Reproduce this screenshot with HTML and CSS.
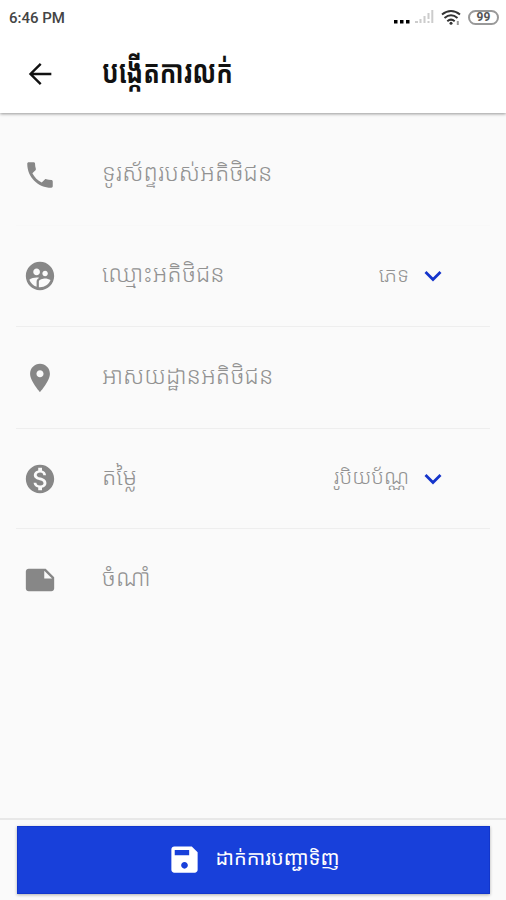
FILE: index.html
```html
<!DOCTYPE html>
<html lang="km">
<head>
    <meta charset="UTF-8">
    <meta name="viewport" content="width=device-width, initial-scale=1.0">
    <title>បង្កើតការលក់</title>
    <link rel="stylesheet" href="styles.css">
</head>
<body>

    <!-- Header -->
    <header class="header">
        <div class="status-bar">
            <span class="time">6:46 PM</span>
            <div class="status-icons">
                <svg class="dots" width="18" height="20" viewBox="0 0 18 20">
                    <path d="M2 12h3.500v3.500H2zM8 12h3.500v3.500H8zM14 12h3.500v3.500H14z"/>
                </svg>
                <svg class="signal" width="19" height="20" viewBox="0 0 19 20">
                    <path d="M0 13h3v2H0zM4.500 11h2v4h-2zM8.500 8h2v7h-2zM12.500 5h2v6h-2zM16.300 2h2v13h-2zM12.500 13h2v2h-2z"/>
                </svg>
                <svg class="wifi" width="20" height="20" viewBox="0 0 20 20">
                    <path d="M1 6.500Q10 -0.500 19 6.500M3.500 10Q10 4.500 16.500 10M6.300 13.200Q10 10 13.700 13.200"/>
                    <circle cx="10" cy="15.200" r="1.500"/>
                    <path class="wifi-mark" d="M16.800 17v-4"/>
                </svg>
                <span class="battery">99</span>
            </div>
        </div>
        <div class="title-bar">
            <svg class="back" width="34" height="34" viewBox="0 0 24 24">
                <path d="M20 12H5.500M12.500 4.800L5.300 12l7.200 7.200"/>
            </svg>
            <h1>បង្កើតការលក់</h1>
        </div>
    </header>

    <!-- Form -->
    <main class="form">
        <div class="row row-light">
            <svg class="icon" viewBox="0 0 24 24">
                <path d="M6.620 10.790c1.440 2.830 3.760 5.140 6.590 6.590l2.200-2.200c.27-.27.67-.36 1.020-.24 1.120.37 2.330.57 3.570.57.55 0 1 .45 1 1V20c0 .55-.45 1-1 1-9.390 0-17-7.610-17-17 0-.55.45-1 1-1h3.500c.55 0 1 .45 1 1 0 1.250.2 2.450.57 3.570.11.35.03.74-.25 1.020l-2.200 2.200z"/>
            </svg>
            <span class="label">ទូរស័ព្ទរបស់អតិថិជន</span>
        </div>
        <div class="row">
            <svg class="icon" viewBox="0 0 24 24">
                <path d="M11.990 2c-5.520 0-10 4.480-10 10s4.480 10 10 10 10-4.480 10-10-4.480-10-10-10zm3.610 6.340c1.070 0 1.930.86 1.930 1.930 0 1.070-.86 1.930-1.930 1.930-1.070 0-1.930-.86-1.930-1.930-.01-1.070.86-1.930 1.930-1.930zm-6-1.580c1.300 0 2.360 1.060 2.360 2.360 0 1.300-1.060 2.360-2.360 2.360s-2.360-1.060-2.360-2.360c0-1.310 1.050-2.360 2.360-2.360zm0 9.130v3.750c-2.400-.75-4.300-2.600-5.140-4.960 1.050-1.120 3.670-1.690 5.140-1.690.53 0 1.200.08 1.900.22-1.640.87-1.900 2.020-1.900 2.680zM11.990 20c-.27 0-.53-.01-.79-.04v-4.070c0-1.420 2.940-2.130 4.400-2.130 1.070 0 2.920.39 3.840 1.150-1.170 2.970-4.060 5.090-7.450 5.090z"/>
            </svg>
            <span class="label">ឈ្មោះអតិថិជន</span>
            <span class="select">ភេទ</span>
            <svg class="chevron" viewBox="0 0 18 12"><path d="M1.500 2l7.500 7.500L16.500 2"/></svg>
        </div>
        <div class="row row-tall">
            <svg class="icon" viewBox="0 0 24 24">
                <path d="M12 2C8.130 2 5 5.130 5 9c0 5.250 7 13 7 13s7-7.750 7-13c0-3.870-3.130-7-7-7zm0 9.500c-1.380 0-2.500-1.120-2.500-2.500s1.120-2.500 2.500-2.500 2.500 1.120 2.500 2.500-1.120 2.500-2.500 2.500z"/>
            </svg>
            <span class="label">អាសយដ្ឋានអតិថិជន</span>
        </div>
        <div class="row row-short">
            <svg class="icon" viewBox="0 0 24 24">
                <path d="M12 2C6.480 2 2 6.480 2 12s4.480 10 10 10 10-4.480 10-10S17.520 2 12 2zm1.410 16.090V20h-2.670v-1.930c-1.710-.36-3.160-1.460-3.270-3.400h1.960c.1 1.050.82 1.870 2.650 1.870 1.960 0 2.400-.98 2.400-1.590 0-.83-.44-1.610-2.670-2.140-2.480-.6-4.180-1.620-4.180-3.670 0-1.720 1.390-2.840 3.110-3.210V4h2.670v1.950c1.860.45 2.790 1.860 2.850 3.390H14.300c-.05-1.110-.64-1.870-2.220-1.870-1.500 0-2.400.68-2.400 1.640 0 .84.65 1.390 2.670 1.910s4.180 1.390 4.180 3.910c-.01 1.830-1.380 2.830-3.120 3.160z"/>
            </svg>
            <span class="label">តម្លៃ</span>
            <span class="select">រូបិយប័ណ្ណ</span>
            <svg class="chevron" viewBox="0 0 18 12"><path d="M1.500 2l7.500 7.500L16.500 2"/></svg>
        </div>
        <div class="row row-last">
            <svg class="icon" viewBox="0 0 24 24">
                <path d="M22 10l-6-6H4c-1.100 0-2 .9-2 2v12.010c0 1.100.9 1.990 2 1.990l16-.01c1.100 0 2-.89 2-1.990v-8zm-7-4.500l5.500 5.500H15V5.500z"/>
            </svg>
            <span class="label">ចំណាំ</span>
        </div>
    </main>

    <!-- Save button -->
    <footer class="footer">
        <button type="button" class="btn">
            <svg width="35" height="35" viewBox="0 0 24 24">
                <path d="M17 3H5c-1.110 0-2 .9-2 2v14c0 1.100.89 2 2 2h14c1.100 0 2-.9 2-2V7l-4-4zm-5 15.300c-1.270 0-2.300-1.030-2.300-2.300s1.030-2.300 2.300-2.300 2.300 1.030 2.300 2.300-1.030 2.300-2.300 2.300zm3.200-9.300H5.300V5.400h9.900V9z"/>
            </svg>
            <span>ដាក់ការបញ្ជាទិញ</span>
        </button>
    </footer>

</body>
</html>
```
FILE: styles.css
```css
* {
    box-sizing: border-box;
}

body {
    margin: 0;
    height: 900px;
    display: flex;
    flex-direction: column;
    background-color: #fafafa;
    font-family: Roboto, "Noto Sans Khmer", "Khmer OS", "DejaVu Sans", sans-serif;
    overflow: hidden;
}

/* Header */
.header {
    height: 113px;
    background-color: #fff;
    box-shadow: 0 1px 3px rgba(0, 0, 0, 0.4);
}

.status-bar {
    display: flex;
    justify-content: space-between;
    height: 36px;
    padding: 8px 7px 0 9px;
}

.time {
    font-size: 15px;
    line-height: 20px;
    font-weight: 500;
    color: #444;
}

.status-icons {
    display: flex;
    align-items: flex-start;
}

.dots {
    margin-right: 5px;
}

.signal {
    margin-right: 7px;
    fill: #ccc;
}

.wifi {
    margin-right: 7px;
    fill: #333;
}

.wifi path {
    fill: none;
    stroke: #333;
    stroke-width: 2;
}

.wifi .wifi-mark {
    stroke: #999;
}

.battery {
    width: 31px;
    height: 15px;
    margin-top: 2px;
    border: 2px solid #999;
    border-radius: 8px;
    font-size: 12px;
    font-weight: 700;
    line-height: 11px;
    text-align: center;
    color: #555;
}

.title-bar {
    display: flex;
    align-items: center;
    height: 75px;
    padding-left: 23px;
}

.back {
    fill: none;
    stroke: #111;
    stroke-width: 1.7;
}

.title-bar h1 {
    margin: 0 0 3px 45px;
    font-size: 32px;
    line-height: 40px;
    font-weight: 700;
    color: #111;
    white-space: nowrap;
    transform: scaleX(0.765);
    transform-origin: left;
}

/* Form rows */
.form {
    flex: 1;
    padding: 12px 16px 0;
}

.row {
    display: flex;
    align-items: center;
    height: 101px;
    padding: 0 48px 0 7px;
    border-bottom: 1px solid #eee;
    color: #929292;
}

.row-light {
    border-bottom-color: #f8f8f8;
}

.row-tall {
    height: 102px;
}

.row-short {
    height: 100px;
}

.row-last {
    border-bottom: none;
}

.icon {
    width: 34px;
    height: 34px;
    fill: #878787;
}

.label {
    margin: 0 0 4px 45px;
    font-size: 23.4px;
    line-height: 40px;
    font-weight: 300;
    white-space: nowrap;
}

.select {
    margin: 0 0 3px auto;
    font-size: 20.6px;
    line-height: 40px;
    font-weight: 300;
    white-space: nowrap;
}

.chevron {
    width: 18px;
    height: 12px;
    margin-left: 15px;
    fill: none;
    stroke: #1434cb;
    stroke-width: 2.8;
}

/* Footer */
.footer {
    height: 82px;
    padding: 6px 16px 0 17px;
    border-top: 2px solid #e8e8e8;
}

.btn {
    display: flex;
    align-items: center;
    justify-content: center;
    gap: 14px;
    width: 100%;
    height: 68px;
    padding: 0 1px 2px 0;
    border: 1px solid #1236cc;
    background-color: #1840da;
    box-shadow: 0 1px 3px rgba(0, 0, 0, 0.3);
    color: #fff;
    font-family: inherit;
    font-size: 20px;
    line-height: 32px;
    white-space: nowrap;
}

.btn span {
    margin-bottom: 2px;
}

.btn svg {
    fill: #fff;
}
```
